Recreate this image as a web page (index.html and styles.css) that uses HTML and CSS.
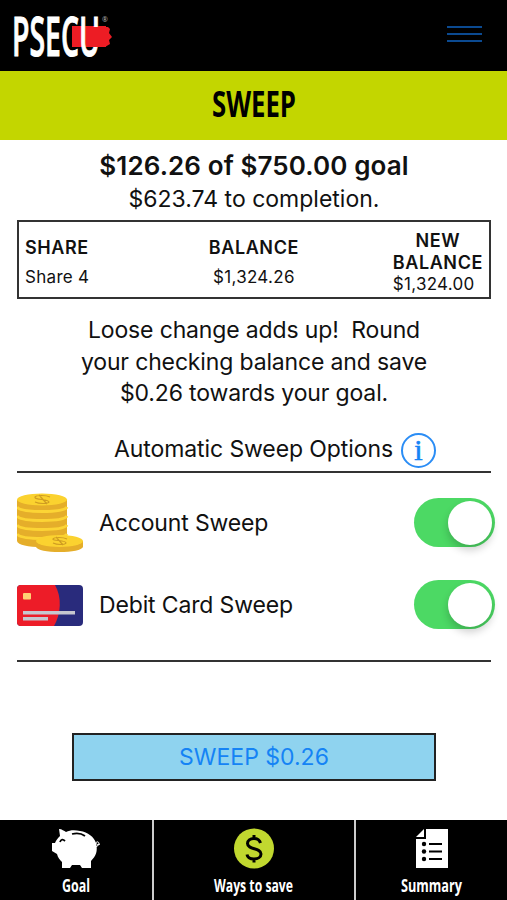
FILE: index.html
```html
<!DOCTYPE html>
<html lang="en">
<head>
    <meta charset="UTF-8">
    <meta name="viewport" content="width=device-width, initial-scale=1.0">
    <title>PSECU Sweep</title>
    <link rel="stylesheet" href="styles.css">
</head>
<body>

    <div class="container">
        <!-- Top bar -->
        <div class="header">
            <svg class="logo" width="102" height="70" viewBox="0 0 102 70" aria-label="PSECU">
                <path d="M59 26h34v21H59z" fill="#ed1c24"/>
                <text class="logo-text" x="-1" y="55.500" textLength="88" lengthAdjust="spacingAndGlyphs">PSECU</text>
                <path d="M75 27h20l2 2-1 4 3 4-3 3 1 4-5 3H75z" fill="#ed1c24"/>
                <text class="reg" x="89" y="22">®</text>
            </svg>
            <div class="menu">
                <span></span>
                <span></span>
                <span></span>
            </div>
        </div>

        <div class="title-bar">
            <svg width="90" height="60" viewBox="0 0 90 60">
                <text class="title" x="3" y="41" textLength="84" lengthAdjust="spacingAndGlyphs">SWEEP</text>
            </svg>
        </div>

        <!-- Main content section -->
        <div class="main-content">
            <div class="goal">$126.26 of $750.00 goal</div>
            <div class="remaining">$623.74 to completion.</div>

            <div class="share-box">
                <div class="share">
                    <div class="label">SHARE</div>
                    <div class="value">Share 4</div>
                </div>
                <div class="balance">
                    <div class="label">BALANCE</div>
                    <div class="value">$1,324.26</div>
                </div>
                <div class="new-balance">
                    <div class="label">NEW<br>BALANCE</div>
                    <div class="value">$1,324.00</div>
                </div>
            </div>

            <div class="message">Loose change adds up!&nbsp; Round<br>your checking balance and save<br>$0.26 towards your goal.</div>

            <div class="options-title">
                <span>Automatic Sweep Options</span>
                <span class="info">i</span>
            </div>

            <div class="options">
                <div class="option">
                    <svg width="66" height="60" viewBox="0 0 66 60">
                        <path d="M0 7v41c1 4 11 6 25 6s24-2 25-6V7z" fill="#e5ae2a"/>
                        <g fill="none" stroke="#fcd435" stroke-width="3">
                            <path d="M0 14c2 3 12 4.500 25 4.500S48 17 50 14"/>
                            <path d="M0 23c2 3 12 4.500 25 4.500S48 26 50 23"/>
                            <path d="M0 32c2 3 12 4.500 25 4.500S48 35 50 32"/>
                            <path d="M0 41c2 3 12 4.500 25 4.500S48 44 50 41"/>
                        </g>
                        <ellipse cx="25" cy="6.500" rx="25" ry="6" fill="#fbd22f"/>
                        <path d="M33 4c-4-2-14-2-15 0-1 3 14 2 14 5-1 2-10 2-14 0M22 2l8 9" fill="none" stroke="#cf9c22" stroke-width="1.200"/>
                        <path d="M19 48v6c1 3 11 5 23.500 5S65 57 66 54v-6z" fill="#e5ae2a"/>
                        <ellipse cx="42.500" cy="48" rx="23.500" ry="6" fill="#fbd22f"/>
                        <path d="M50 46c-4-2-13-2-14 0s13 1 13 4c-1 2-9 2-13 0M39 44l7 8" fill="none" stroke="#cf9c22" stroke-width="1.200"/>
                    </svg>
                    <div class="option-name">Account Sweep</div>
                    <div class="toggle"></div>
                </div>
                <div class="option">
                    <svg width="66" height="42" viewBox="0 0 66 42">
                        <rect width="66" height="41" y="1" rx="4" fill="#292b7c"/>
                        <path d="M4 1h34c7 12 6 29-1 41H4a4 4 0 0 1-4-4V5a4 4 0 0 1 4-4z" fill="#ed1c28"/>
                        <rect x="6" y="9" width="8" height="6.500" rx="1" fill="#ffd174"/>
                        <path d="M6 27h52v3.500H6zM6 33h25v3.500H6z" fill="#c6c6cf"/>
                    </svg>
                    <div class="option-name">Debit Card Sweep</div>
                    <div class="toggle"></div>
                </div>
            </div>

            <button class="sweep-button">SWEEP $0.26</button>
        </div>

        <!-- Bottom tabs -->
        <div class="tabs">
            <div class="tab">
                <svg width="50" height="42" viewBox="0 0 50 42">
                    <path d="M8 1c3 0 5 2 7 3 4-2 9-2 14-1 8 1 14 6 16 12 2 8 0 13-5 18v7h-9l-2-3h-8l-2 3h-8v-6c-2-2-4-4-5-8l-5-3v-8h3c1-3 3-5 5-7z" fill="#fff"/>
                    <path d="M21 6c4-1 9-1 13 2M9 14c1-3 3-3 5-1" fill="none" stroke="#000" stroke-width="1.800"/>
                    <path d="M44 19c4-1 5-4 3-5s-3 2 0 3l2-1" fill="none" stroke="#fff" stroke-width="1"/>
                </svg>
                <svg width="84" height="29" viewBox="0 0 84 29">
                    <text class="tab-text" x="28" y="21.500" textLength="28" lengthAdjust="spacingAndGlyphs">Goal</text>
                </svg>
            </div>
            <div class="tab">
                <svg width="40" height="42" viewBox="0 0 40 42">
                    <circle cx="20" cy="20.500" r="20" fill="#c1d82f"/>
                    <path d="M26.500 15c-1-3.500-3.500-4.500-6.500-4.500-4 0-6.500 2-6.500 5 0 6.500 13.500 4 13.500 10.500 0 3-3 5-7 5s-6.500-1.500-7-4.500M20 7v4M20 30v4.500" fill="none" stroke="#000" stroke-width="3"/>
                </svg>
                <svg width="84" height="29" viewBox="0 0 84 29">
                    <text class="tab-text" x="2" y="21.500" textLength="79" lengthAdjust="spacingAndGlyphs">Ways to save</text>
                </svg>
            </div>
            <div class="tab">
                <svg width="32" height="42" viewBox="0 0 32 42">
                    <path d="M10 1h22v39H0V11h10z" fill="#fff"/>
                    <path d="M8 1v8H0z" fill="#fff"/>
                    <g fill="#000">
                        <circle cx="8" cy="16" r="2.200"/>
                        <circle cx="8" cy="23.500" r="2.200"/>
                        <circle cx="8" cy="31" r="2.200"/>
                        <path d="M13 15h13v2H13zM13 22.500h13v2H13zM13 30h13v2H13z"/>
                    </g>
                </svg>
                <svg width="84" height="29" viewBox="0 0 84 29">
                    <text class="tab-text" x="11" y="21.500" textLength="61" lengthAdjust="spacingAndGlyphs">Summary</text>
                </svg>
            </div>
        </div>
    </div>

</body>
</html>
```
FILE: styles.css
```css
body {
    margin: 0;
    font-family: Inter, "Liberation Sans", sans-serif;
    color: #111;
    background-color: white;
}
svg {
    display: block;
    flex-shrink: 0;
}
.container {
    height: 900px;
    display: flex;
    flex-direction: column;
    overflow: hidden;
}
.header {
    box-sizing: border-box;
    height: 71px;
    flex-shrink: 0;
    background-color: black;
    padding: 0 25px 0 13px;
    display: flex;
    justify-content: space-between;
}
.logo {
    overflow: visible;
}
.logo-text {
    font: 600 54px "Open Sans", sans-serif;
    fill: white;
    stroke: white;
    stroke-width: 1px;
}
.reg {
    font: 7px "Open Sans", sans-serif;
    fill: #bbb;
}
.menu {
    width: 35px;
    padding-top: 26px;
    display: flex;
    flex-direction: column;
    gap: 5px;
}
.menu span {
    height: 2px;
    background-color: #0b4a91;
}
.title-bar {
    height: 69px;
    flex-shrink: 0;
    background-color: #c3d600;
    display: flex;
    justify-content: center;
    align-items: center;
}
.title {
    font: bold 36px "Open Sans", sans-serif;
}
.main-content {
    flex: 1;
    padding: 0 16px 0 17px;
    text-align: center;
}
.goal {
    margin-top: 9px;
    font-size: 26px;
    font-weight: 600;
    line-height: 33px;
    letter-spacing: 0.1px;
}
.remaining {
    font-size: 23px;
    line-height: 34px;
}
.share-box {
    box-sizing: border-box;
    height: 79px;
    margin-top: 4px;
    border: 2px solid #333;
    padding: 0 6px;
    display: flex;
    justify-content: space-between;
    font-size: 17px;
}
.label {
    font-size: 18px;
    font-weight: 600;
    line-height: 22px;
    letter-spacing: 0.6px;
}
.value {
    line-height: 22px;
    letter-spacing: 0.3px;
}
.share {
    width: 90px;
    padding-top: 15px;
    text-align: left;
}
.balance {
    padding-top: 15px;
}
.share .value, .balance .value {
    margin-top: 7px;
}
.new-balance {
    padding-top: 8px;
}
.new-balance .value {
    margin-top: -1px;
    text-align: left;
}
.message {
    margin-top: 16px;
    font-size: 23px;
    line-height: 31.5px;
    letter-spacing: -0.15px;
}
.options-title {
    height: 61px;
    border-bottom: 2px solid #333;
    padding-left: 42px;
    display: flex;
    justify-content: center;
    align-items: flex-end;
    gap: 8px;
    font-size: 23px;
    line-height: 43px;
    letter-spacing: -0.1px;
}
.info {
    box-sizing: border-box;
    width: 35px;
    height: 35px;
    margin-bottom: 3px;
    border: 2px solid #2b8df5;
    border-radius: 50%;
    font: 30px/30px "Liberation Serif", serif;
    -webkit-text-stroke: 0.6px #1583f5;
    color: #1583f5;
}
.options {
    height: 187px;
    border-bottom: 2px solid #333;
}
.option {
    height: 82px;
    margin-right: -4px;
    display: flex;
    align-items: center;
}
.option:first-child {
    padding-top: 9px;
}
.option-name {
    flex: 1;
    margin-left: 16px;
    text-align: left;
    font-size: 23px;
    letter-spacing: -0.15px;
}
.toggle {
    box-sizing: border-box;
    width: 81px;
    height: 49px;
    border-radius: 25px;
    padding: 3px;
    background-color: #4cd964;
}
.toggle::after {
    content: "";
    display: block;
    width: 44px;
    height: 44px;
    margin-left: 31px;
    border-radius: 50%;
    background-color: white;
    box-shadow: 0 5px 9px rgba(0, 0, 0, 0.2);
}
.sweep-button {
    width: 364px;
    height: 48px;
    margin-top: 71px;
    border: 2px solid #222;
    padding: 0;
    background-color: #8fd3ef;
    font-family: inherit;
    font-size: 23px;
    color: #1583f5;
}
.tabs {
    height: 80px;
    background-color: black;
    display: grid;
    grid-template-columns: 154px 202px 1fr;
}
.tab {
    border-right: 2px solid #ccc;
    padding-top: 8px;
    display: flex;
    flex-direction: column;
    align-items: center;
}
.tab:last-child {
    border-right: none;
}
.tab-text {
    font: bold 17px "Open Sans", sans-serif;
    fill: white;
}
```
